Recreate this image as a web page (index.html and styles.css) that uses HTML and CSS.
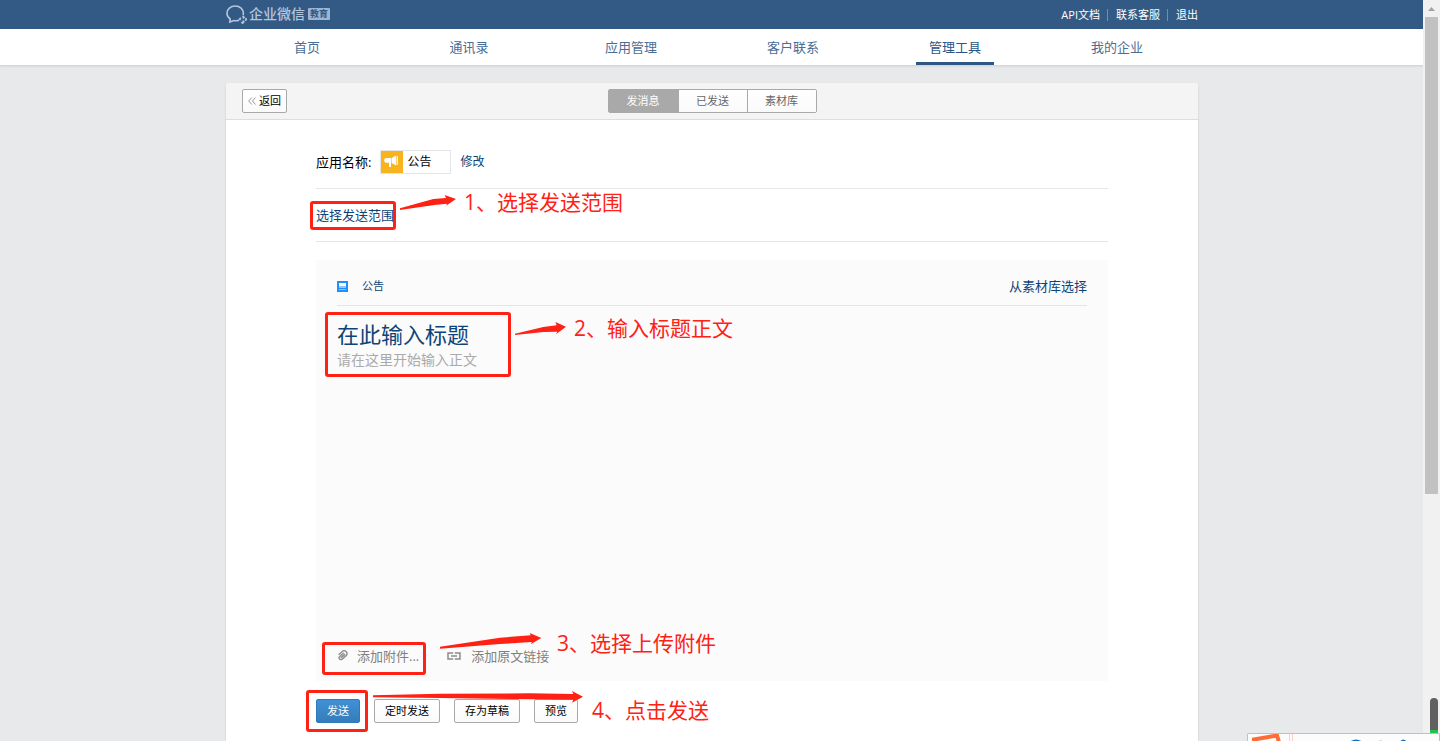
FILE: index.html
```
<!DOCTYPE html>
<html lang="zh-CN">
<head>
<meta charset="utf-8">
<title>企业微信</title>
<link rel="stylesheet" href="styles.css">
</head>
<body>

<header class="topbar">
  <div class="wrap topbar-inner">
    <a class="logo" href="#">
      <svg class="logo-icon" width="21" height="20" viewBox="0 0 21 20" fill="none" stroke="#b4c6dd" stroke-width="1.6">
        <path d="M13 16.200c-1.600.6-3.400.7-5.200.3L3.800 18l.4-3C2.200 13.600 1 11.600 1 9.200 1 5 4.500 2 9.200 2s8.200 3 8.200 7.200c0 .7-.1 1.300-.3 1.900"/>
        <path d="M16.600 11.800l1.500 1.600-1.300 1.100M19.500 14.200l1 1.300-1.400 1.100M16.700 16.600l1.100 1.300-1.300 1.300-1.100-1.300M14.900 13.900l-1.300 1.100 1 1.300"/>
      </svg>
      <span class="logo-name">企业微信</span>
      <span class="logo-tag">教育</span>
    </a>
    <div class="toplinks">
      <a href="#">API文档</a>
      <a href="#">联系客服</a>
      <a href="#">退出</a>
    </div>
  </div>
</header>

<nav class="nav">
  <div class="wrap nav-inner">
    <a href="#">首页</a>
    <a href="#">通讯录</a>
    <a href="#">应用管理</a>
    <a href="#">客户联系</a>
    <a class="active" href="#">管理工具</a>
    <a href="#">我的企业</a>
  </div>
</nav>

<main class="wrap card">
  <div class="card-head">
    <button class="btn back" type="button">
      <svg width="8" height="8" viewBox="0 0 8 8" fill="none" stroke="#999"><path d="M3.800.5L.7 4l3.100 3.500M7.500.5L4.400 4l3.100 3.500"/></svg>
      返回
    </button>
    <div class="tabs">
      <button class="tab on" type="button">发消息</button>
      <button class="tab" type="button">已发送</button>
      <button class="tab" type="button">素材库</button>
    </div>
  </div>

  <div class="content">
    <div class="row app-row">
      <span>应用名称:</span>
      <span class="app">
        <svg width="22" height="22" viewBox="0 0 22 22">
          <rect width="22" height="22" fill="#f8b31d"/>
          <path fill="#fff" d="M5.500 7H10v9H8v-4.200H5.500a2.400 2.400 0 0 1 0-4.800zM10.600 7l4.600-2.400v10L10.600 12zM15.800 5h1v9h-1z"/>
        </svg>
        公告
      </span>
      <a class="small" href="#">修改</a>
    </div>
    <div class="row range-row">
      <a href="#">选择发送范围</a>
    </div>

    <section class="editor">
      <div class="editor-head">
        <svg width="11" height="11" viewBox="0 0 11 11">
          <rect width="11" height="11" fill="#1e90ff"/>
          <rect x="2" y="2" width="7" height="3" fill="#fff"/>
          <rect x="2" y="5" width="7" height="2" fill="#8fc8ff"/>
          <rect x="2" y="8" width="7" height="1" fill="#8fc8ff"/>
        </svg>
        <span class="kind">公告</span>
        <a href="#">从素材库选择</a>
      </div>
      <input class="title" type="text" aria-label="标题" placeholder="在此输入标题">
      <textarea class="body" aria-label="正文" placeholder="请在这里开始输入正文"></textarea>
      <div class="attach">
        <button class="attach-btn" type="button">
          <svg width="12" height="12" viewBox="0 0 12 12" fill="none" stroke="#8c8c8c" stroke-width="1.400"><g transform="rotate(-42 6 6)"><path d="M8.500 4.200H3.200a1.800 1.800 0 0 0 0 3.600h6a2.900 2.900 0 0 0 0-5.600H3.500M3.200 6h5.600"/></g></svg>
          添加附件...
        </button>
        <button class="attach-btn link-btn" type="button">
          <svg width="14" height="8" viewBox="0 0 14 8" fill="none" stroke="#8c8c8c" stroke-width="1.500"><path d="M6.200 1H1v6h5.200M7.800 1H13v6H7.800M4 4h6"/></svg>
          添加原文链接
        </button>
      </div>
    </section>

    <div class="actions">
      <button class="btn primary" type="button">发送</button>
      <button class="btn" type="button">定时发送</button>
      <button class="btn" type="button">存为草稿</button>
      <button class="btn" type="button">预览</button>
    </div>
  </div>

  <!-- step notes over the form -->
  <div class="mark mark-range"></div>
  <div class="mark mark-text"></div>
  <div class="mark mark-attach"></div>
  <div class="mark mark-send"></div>

  <div class="note note-range">
    <svg width="56" height="15" viewBox="300 171 168 45"><path d="M300 211L400 183l38-3-4-9 34 12-30 20 3-6-38 4-103 15z"/></svg>
    <span>1、选择发送范围</span>
  </div>
  <div class="note note-text">
    <svg width="51" height="13" viewBox="15 68 153 39"><path d="M15 103l85-20 40-5-4-10 32 14-30 23 4-8-42 1-85 9z"/></svg>
    <span>2、输入标题正文</span>
  </div>
  <div class="note note-attach">
    <svg width="102" height="16" viewBox="420 38 306 48"><path d="M420 79l180-27 92-7-3-7 35 15-32 19 4-7-96 6-180 14z"/></svg>
    <span>3、选择上传附件</span>
  </div>
  <div class="note note-send">
    <svg width="210" height="12" viewBox="220 213 630 36"><path d="M220 226l200-5 270-1 131 2-4-9 33 17-33 18 4-9-131-1-270-4-200-2z"/></svg>
    <span>4、点击发送</span>
  </div>
</main>

<div class="scrollbar">
  <svg width="7" height="4" viewBox="0 0 7 4"><path d="M0 4L3.500 0 7 4z" fill="#a3a3a3"/></svg>
  <div class="thumb"></div>
</div>
<div class="dark-thumb"></div>
<div class="tray">
  <svg width="192" height="7" viewBox="0 0 192 7" fill="none">
    <path d="M6 8V5.500L29 1.500 31 8" stroke="#ff6c38" stroke-width="4"/>
    <path d="M41.500 0v7M44.500 0v7" stroke="#ffd0c0"/>
    <path d="M103 8q5-3 10 0M153 8q2-3 5 0" stroke="#1673c5" stroke-width="2"/>
    <path d="M131 7h3" stroke="#a8cdea"/>
  </svg>
</div>

</body>
</html>
```
FILE: styles.css
```
* {
  box-sizing: border-box;
}

body {
  margin: 0;
  padding-right: 16px;
  height: 100vh;
  overflow: hidden;
  display: flex;
  flex-direction: column;
  background: #e8e9eb;
  color: #000;
  font: 13px/20px "Open Sans", "Noto Sans CJK SC", sans-serif;
}

a {
  color: #0d4478;
  text-decoration: none;
}

button,
input,
textarea {
  font-family: inherit;
  margin: 0;
  padding: 0;
}

svg {
  flex: none;
}

.wrap {
  width: 100%;
  max-width: 972px;
  margin: 0 auto;
}

/* top bar */
.topbar {
  background: #335a85;
  margin-right: -16px;
  padding-right: 16px;
}

.topbar-inner {
  display: flex;
  justify-content: space-between;
  align-items: center;
  height: 29px;
}

.logo {
  display: flex;
  align-items: center;
  padding-bottom: 2px;
  color: #b4c6dd;
}

.logo-name {
  margin: 0 3px 0 2px;
  font-size: 14px;
  font-weight: 500;
}

.logo-tag {
  padding: 0 2px;
  border-radius: 1px;
  background: #9db4d3;
  color: #335a85;
  font-size: 9px;
  font-weight: bold;
  line-height: 12px;
}

.toplinks {
  display: flex;
  font-size: 11px;
  line-height: 12px;
}

.toplinks a {
  color: #fff;
}

.toplinks a + a {
  margin-left: 7px;
  padding-left: 8px;
  border-left: 1px solid #6f8eb1;
}

/* main menu */
.nav {
  background: #fff;
  border-bottom: 1px solid #d3d5d9;
  box-shadow: 0 1px 2px rgba(0, 0, 0, .06);
}

.nav-inner {
  display: flex;
  height: 36px;
}

.nav-inner a {
  flex: 1;
  display: flex;
  flex-direction: column;
  align-items: center;
  padding-top: 8px;
  color: #4a6d96;
}

.nav-inner .active {
  color: #2b5486;
}

.nav-inner .active::after {
  content: "";
  width: 78px;
  height: 3px;
  margin-top: 5px;
  background: #2f5785;
}

/* card */
.card {
  position: relative;
  flex: 1;
  margin-top: 17px;
  border-radius: 3px 3px 0 0;
  background: #fff;
  box-shadow: 0 1px 2px rgba(0, 0, 0, .15);
}

.card-head {
  display: grid;
  grid-template-columns: 1fr auto 1fr;
  align-items: center;
  height: 37px;
  padding: 0 16px;
  border-bottom: 1px solid #dcdde0;
  border-radius: 3px 3px 0 0;
  background: #f4f4f4;
}

.btn {
  height: 24px;
  padding: 0 10px;
  border: 1px solid #a9a9a9;
  border-radius: 2px;
  background: linear-gradient(#fff, #fafafa);
  color: #000;
  font-size: 11px;
  line-height: 20px;
}

.back {
  justify-self: start;
  display: flex;
  align-items: center;
  gap: 3px;
  padding: 0 5px;
}

.tabs {
  display: flex;
  border: 1px solid #a9a9a9;
  border-radius: 2px;
}

.tab {
  width: 69px;
  height: 22px;
  border: 0;
  background: linear-gradient(#fff, #fafafa);
  color: #666;
  font-size: 11px;
  line-height: 20px;
}

.tab + .tab {
  border-left: 1px solid #a9a9a9;
}

.tabs .on {
  background: #a9a9a9;
  color: #fff;
}

.content {
  padding: 30px 90px 0;
}

.row {
  display: flex;
  border-bottom: 1px solid #e6e7e9;
}

.app-row {
  align-items: center;
  gap: 9px;
  padding-bottom: 14px;
}

.app {
  display: flex;
  align-items: center;
  gap: 4px;
  width: 71px;
  border: 1px solid #e4e5e8;
  font-size: 12px;
  line-height: 22px;
}

.small {
  font-size: 12px;
}

.range-row {
  padding: 16px 0;
}

/* editor */
.editor {
  display: flex;
  flex-direction: column;
  height: 421px;
  margin-top: 18px;
  padding: 16px 21px 15px;
  background: #fbfbfb;
}

.editor-head {
  display: flex;
  align-items: center;
  padding-bottom: 9px;
  border-bottom: 1px solid #e4e5e7;
}

.kind {
  flex: 1;
  margin-left: 14px;
  color: #0d4478;
  font-size: 11px;
}

.title,
.body {
  width: 100%;
  border: 0;
  background: none;
  outline: 0;
}

.title {
  height: 32px;
  margin-top: 12px;
  font-size: 22px;
}

.title::placeholder {
  color: #0d4478;
}

.body {
  flex: 1;
  resize: none;
  font-size: 14px;
  line-height: 20px;
}

.body::placeholder {
  color: #aaa;
}

.attach {
  display: flex;
  gap: 28px;
}

.attach-btn {
  display: flex;
  align-items: center;
  gap: 8px;
  border: 0;
  background: none;
  color: #808080;
  font-size: 13px;
  line-height: 20px;
}

.link-btn {
  gap: 10px;
}

.actions {
  display: flex;
  gap: 14px;
  padding-top: 18px;
}

.primary {
  border-color: #2f7ab8;
  background: linear-gradient(#4190d6, #347db9);
  color: #fff;
}

/* red notes */
.mark {
  position: absolute;
  border: 3px solid #ff2113;
  border-radius: 3px;
  pointer-events: none;
}

.mark-range {
  left: 84px;
  top: 118px;
  width: 86px;
  height: 29px;
}

.mark-text {
  left: 99px;
  top: 229px;
  width: 186px;
  height: 65px;
}

.mark-attach {
  left: 96px;
  top: 559px;
  width: 104px;
  height: 33px;
}

.mark-send {
  left: 80px;
  top: 607px;
  width: 62px;
  height: 42px;
}

.note {
  position: absolute;
  display: flex;
  gap: 8px;
  color: #ff2113;
  fill: #ff2113;
  font-size: 21px;
  line-height: 28px;
  white-space: nowrap;
  pointer-events: none;
}

.note-range {
  left: 174px;
  top: 105px;
  align-items: center;
}

.note-text {
  left: 289px;
  top: 231px;
  align-items: center;
}

.note-attach {
  left: 214px;
  top: 546px;
  gap: 15px;
}

.note-attach svg {
  margin-top: 4px;
}

.note-send {
  left: 147px;
  top: 608px;
  gap: 9px;
}

.note-send span {
  padding-top: 5px;
}

/* window edge */
.scrollbar {
  position: fixed;
  top: 0;
  right: 0;
  bottom: 0;
  width: 17px;
  padding: 7px 2px 0;
  background: #f1f1f1;
}

.scrollbar svg {
  display: block;
  margin: 0 auto 6px;
}

.thumb {
  height: 477px;
  background: #c1c1c1;
}

.dark-thumb {
  position: fixed;
  right: 2px;
  bottom: 8px;
  width: 8px;
  height: 35px;
  border-bottom: 3px solid #1fc24d;
  border-radius: 4px 4px 0 0;
  background: #606060;
}

.tray {
  position: fixed;
  right: 0;
  bottom: 0;
  width: 193px;
  height: 8px;
  border: 1px solid #b5c3cc;
  border-width: 1px 1px 0;
  border-radius: 2px 2px 0 0;
  background: #fcfcfc;
  overflow: hidden;
}

.tray svg {
  display: block;
}
```
